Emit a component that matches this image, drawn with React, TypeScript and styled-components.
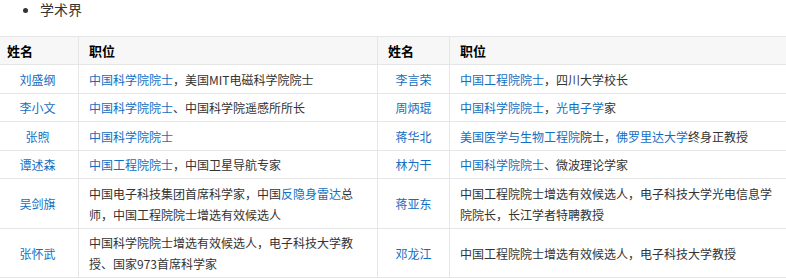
import React from "react";
import styled, { createGlobalStyle } from "styled-components";

const GlobalStyle = createGlobalStyle`
  body {
    margin: 0;
    background: #fff;
    font-family: "Noto Sans CJK SC", "Liberation Sans", sans-serif;
    color: #333;
  }
`;

const Page = styled.div`
  width: 786px;
  overflow: hidden;
`;

const BulletList = styled.ul`
  margin: 0 0 17px;
  padding-left: 40px;
  font-size: 14px;
  line-height: 19px;
`;

const BulletItem = styled.li`
  list-style: disc;
  color: #333;
`;

const Table = styled.table`
  margin-left: -4px;
  width: 790px;
  table-layout: fixed;
  border-collapse: collapse;
  font-size: 12px;
`;

const HeadCell = styled.th`
  background: #f7f7f7;
  border: 1px solid #e6e6e6;
  padding: 3px 10px;
  height: 21px;
  line-height: 21px;
  text-align: left;
  font-weight: bold;
  font-size: 13px;
  color: #000;
`;

const Cell = styled.td<{ $center?: boolean }>`
  border: 1px solid #e6e6e6;
  padding: 3.5px 10px 3px;
  line-height: 21px;
  text-align: ${(p) => (p.$center ? "center" : "left")};
  vertical-align: middle;
  color: #333;
`;

const Link = styled.span`
  color: #136ec2;
`;

type Part = string | { link: string };

type Person = { name: string; desc: Part[] };

const rows: [Person, Person][] = [
  [
    { name: "刘盛纲", desc: [{ link: "中国科学院院士" }, "，美国MIT电磁科学院院士"] },
    { name: "李言荣", desc: [{ link: "中国工程院院士" }, "，四川大学校长"] },
  ],
  [
    { name: "李小文", desc: [{ link: "中国科学院院士" }, "、中国科学院遥感所所长"] },
    { name: "周炳琨", desc: [{ link: "中国科学院院士" }, "，", { link: "光电子学" }, "家"] },
  ],
  [
    { name: "张煦", desc: [{ link: "中国科学院院士" }] },
    {
      name: "蒋华北",
      desc: [{ link: "美国医学与生物工程院" }, "院士，", { link: "佛罗里达大学" }, "终身正教授"],
    },
  ],
  [
    { name: "谭述森", desc: [{ link: "中国工程院院士" }, "，中国卫星导航专家"] },
    { name: "林为干", desc: [{ link: "中国科学院院士" }, "、微波理论学家"] },
  ],
  [
    {
      name: "吴剑旗",
      desc: [
        "中国电子科技集团首席科学家，中国",
        { link: "反隐身雷达" },
        "总师，中国工程院院士增选有效候选人",
      ],
    },
    {
      name: "蒋亚东",
      desc: ["中国工程院院士增选有效候选人，电子科技大学光电信息学院院长，长江学者特聘教授"],
    },
  ],
  [
    {
      name: "张怀武",
      desc: ["中国科学院院士增选有效候选人，电子科技大学教授、国家973首席科学家"],
    },
    { name: "邓龙江", desc: ["中国工程院院士增选有效候选人，电子科技大学教授"] },
  ],
];

const renderDesc = (parts: Part[]) =>
  parts.map((p, i) =>
    typeof p === "string" ? <React.Fragment key={i}>{p}</React.Fragment> : <Link key={i}>{p.link}</Link>
  );

export default function App() {
  return (
    <Page>
      <GlobalStyle />
      <BulletList>
        <BulletItem>学术界</BulletItem>
      </BulletList>
      <Table>
        <colgroup>
          <col style={{ width: 82 }} />
          <col style={{ width: 299 }} />
          <col style={{ width: 72 }} />
          <col style={{ width: 337 }} />
        </colgroup>
        <thead>
          <tr>
            <HeadCell>姓名</HeadCell>
            <HeadCell>职位</HeadCell>
            <HeadCell>姓名</HeadCell>
            <HeadCell>职位</HeadCell>
          </tr>
        </thead>
        <tbody>
          {rows.map(([a, b]) => (
            <tr key={a.name}>
              <Cell $center>
                <Link>{a.name}</Link>
              </Cell>
              <Cell>{renderDesc(a.desc)}</Cell>
              <Cell $center>
                <Link>{b.name}</Link>
              </Cell>
              <Cell>{renderDesc(b.desc)}</Cell>
            </tr>
          ))}
        </tbody>
      </Table>
    </Page>
  );
}
